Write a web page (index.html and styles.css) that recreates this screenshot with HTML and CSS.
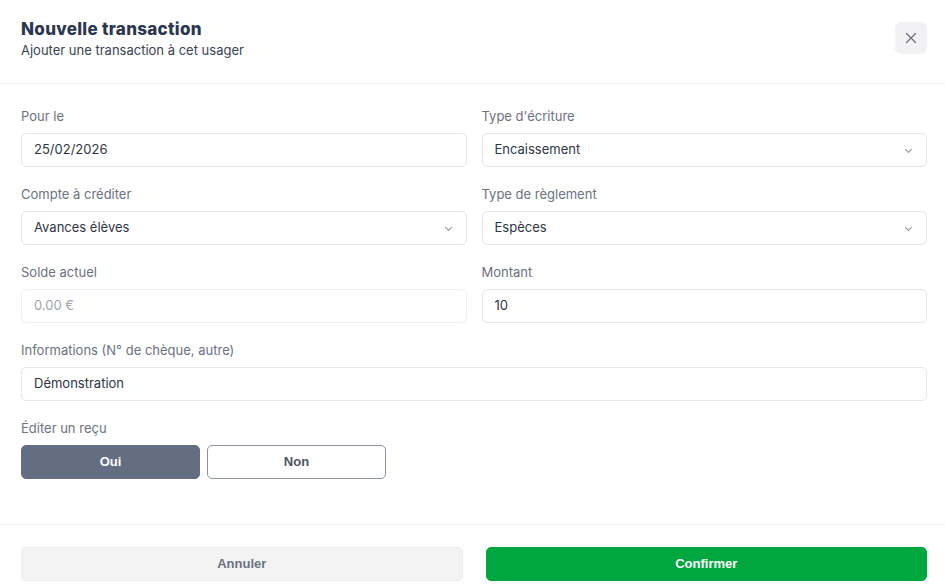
FILE: index.html
```html
<!DOCTYPE html>
<html lang="fr">
<head>
    <meta charset="UTF-8">
    <meta name="viewport" content="width=device-width, initial-scale=1.0">
    <title>Nouvelle transaction</title>
    <link rel="stylesheet" href="styles.css">
</head>
<body>
<div class="modal">
    <div class="modal-header">
        <div>
            <h1>Nouvelle transaction</h1>
            <p class="subtitle">Ajouter une transaction à cet usager</p>
        </div>
        <button class="close-btn" aria-label="Fermer">
            <svg width="12" height="12" viewBox="0 0 12 12" fill="none" stroke="#6b7280" stroke-width="1.3" stroke-linecap="round">
                <path d="M1.5 1.5 L10.5 10.5 M10.5 1.5 L1.5 10.5"/>
            </svg>
        </button>
    </div>

    <div class="modal-body">
        <div class="grid">
            <div class="field">
                <label>Pour le</label>
                <div class="input">25/02/2026</div>
            </div>
            <div class="field">
                <label>Type d'écriture</label>
                <div class="input select">Encaissement <span class="chevron"></span></div>
            </div>
            <div class="field">
                <label>Compte à créditer</label>
                <div class="input select">Avances élèves <span class="chevron"></span></div>
            </div>
            <div class="field">
                <label>Type de règlement</label>
                <div class="input select">Espèces <span class="chevron"></span></div>
            </div>
            <div class="field">
                <label>Solde actuel</label>
                <div class="input disabled">0.00 €</div>
            </div>
            <div class="field">
                <label>Montant</label>
                <div class="input">10</div>
            </div>
            <div class="field full">
                <label>Informations (N° de chèque, autre)</label>
                <div class="input">Démonstration</div>
            </div>
            <div class="field full">
                <label>Éditer un reçu</label>
                <div class="toggle-group">
                    <button class="toggle active">Oui</button>
                    <button class="toggle">Non</button>
                </div>
            </div>
        </div>
    </div>

    <div class="modal-footer">
        <button class="btn cancel">Annuler</button>
        <button class="btn confirm">Confirmer</button>
    </div>
</div>
</body>
</html>
```
FILE: styles.css
```css
:root {
    --text-color: #2e3646;
    --label-color: #6b7280;
    --border-color: #e6e7eb;
    --green: #00a63e;
}

html {
    background-color: #ffffff;
    font-family: Inter, "Noto Sans", sans-serif;
    font-size: 13px;
    color: var(--text-color);
}

body {
    margin: 0;
}

.modal {
    width: 100%;
}

.modal-header {
    display: flex;
    justify-content: space-between;
    align-items: flex-start;
    padding: 19px 18px 0 21px;
    height: 64px;
    border-bottom: 1px solid #ebebf0;
}

h1 {
    margin: 0;
    font-size: 17px;
    font-weight: 800;
    line-height: 20px;
    color: #2b3650;
    letter-spacing: 0.3px;
}

.subtitle {
    margin: 2px 0 0 0;
    font-size: 13px;
    line-height: 18px;
    color: #3a4354;
}

.close-btn {
    width: 32px;
    height: 32px;
    margin-top: 3px;
    border: none;
    border-radius: 6px;
    background-color: #f2f2f4;
    display: flex;
    align-items: center;
    justify-content: center;
    cursor: pointer;
    padding: 0;
}

.modal-body {
    padding: 24px 18px 45px 21px;
}

.grid {
    display: grid;
    grid-template-columns: 1fr 1fr;
    column-gap: 15px;
    row-gap: 19px;
}

.field {
    display: flex;
    flex-direction: column;
    gap: 8px;
}

.field.full {
    grid-column: 1 / -1;
}

label {
    font-size: 13px;
    line-height: 17px;
    color: var(--label-color);
}

.input {
    height: 34px;
    box-sizing: border-box;
    border: 1px solid var(--border-color);
    border-radius: 5px;
    padding: 0 12px 3px 12px;
    display: flex;
    align-items: center;
    justify-content: space-between;
    font-size: 13px;
    color: var(--text-color);
}

.input.disabled {
    color: #a0a5ad;
    border-color: #eff0f2;
}

.chevron {
    width: 4px;
    height: 4px;
    border-right: 1px solid #8a909a;
    border-bottom: 1px solid #8a909a;
    transform: rotate(45deg);
    margin-right: 3px;
    margin-top: 1px;
}

.toggle-group {
    display: flex;
    gap: 7px;
}

.toggle {
    width: 179px;
    height: 34px;
    border-radius: 5px;
    border: 1px solid #8a93a3;
    background: #ffffff;
    color: #4b5563;
    font-family: "Liberation Sans", Arial, sans-serif;
    font-weight: 700;
    font-size: 13px;
    padding-bottom: 3px;
    cursor: pointer;
}

.toggle.active {
    background-color: #646e82;
    border-color: #646e82;
    color: #ffffff;
}

.modal-footer {
    display: flex;
    gap: 23px;
    padding: 22px 18px 0 21px;
    border-top: 1px solid #ebebf0;
}

.btn {
    flex: 1;
    height: 34px;
    border-radius: 5px;
    font-family: "Liberation Sans", Arial, sans-serif;
    font-weight: 700;
    font-size: 13px;
    padding-bottom: 2px;
    cursor: pointer;
}

.btn.cancel {
    background-color: #f3f3f4;
    border: 1px solid #ececee;
    color: #6b7280;
}

.btn.confirm {
    background-color: var(--green);
    border: 1px solid var(--green);
    color: #ffffff;
}
```
